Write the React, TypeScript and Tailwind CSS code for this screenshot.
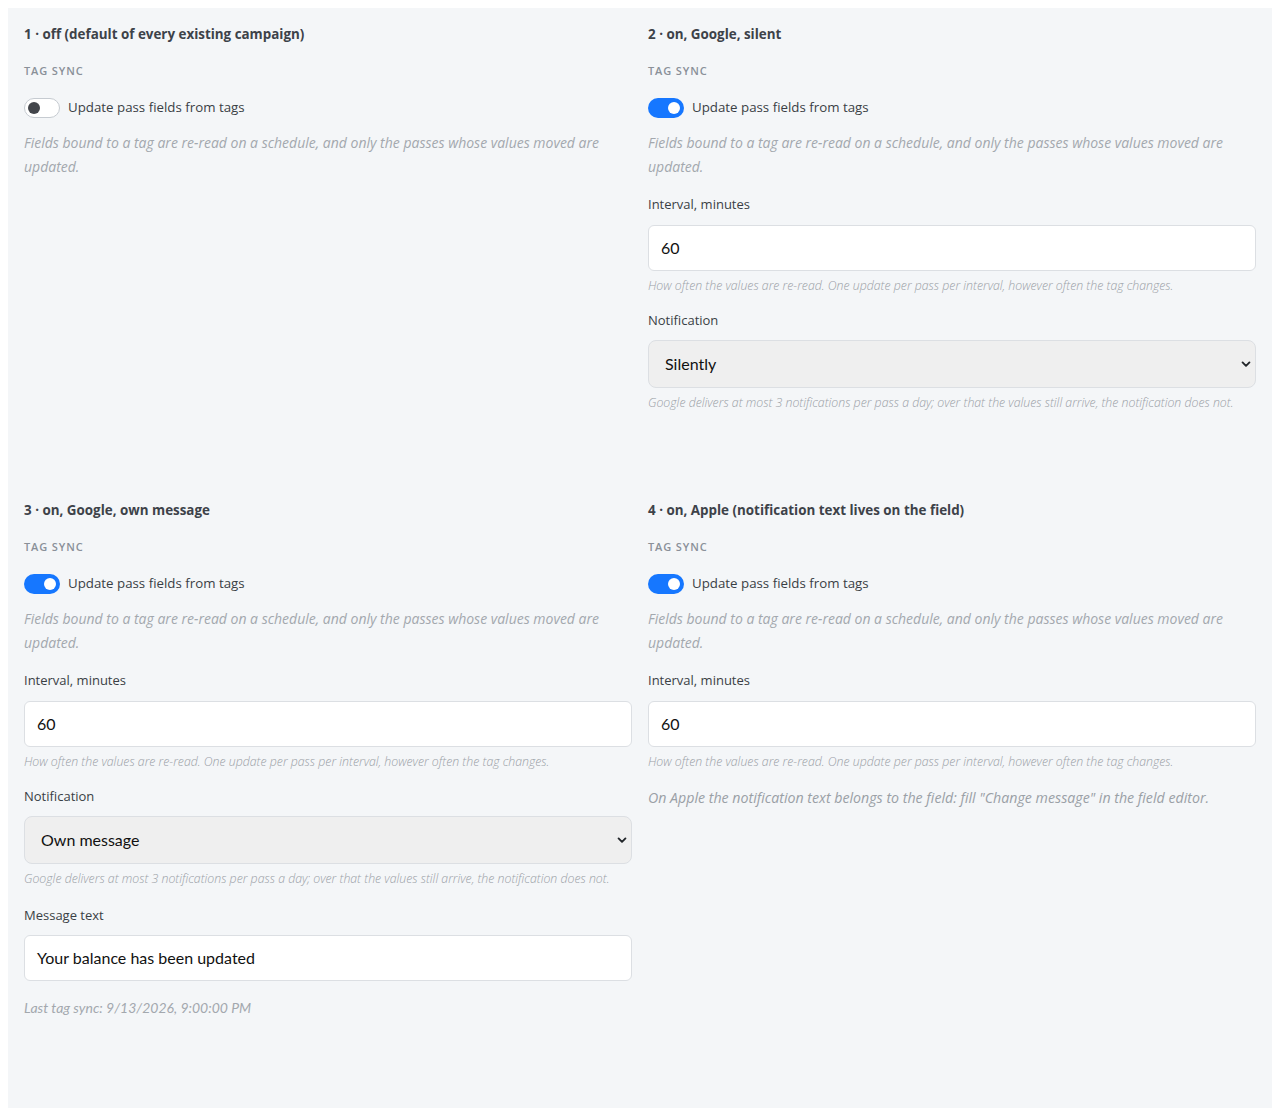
import React from "react";

const body = "font-['Open_Sans',sans-serif]";
const sys = "font-['Lato',sans-serif]";

function Toggle({ on }: { on: boolean }) {
  return on ? (
    <span className="flex h-5 w-9 items-center justify-end rounded-full bg-[#1677ff] px-[4px]">
      <span className="h-3 w-3 rounded-full bg-white" />
    </span>
  ) : (
    <span className="flex h-5 w-9 items-center justify-start rounded-full border border-[#c6cbd1] bg-white px-[3px]">
      <span className="h-3 w-3 rounded-full bg-[#43464b]" />
    </span>
  );
}

function Chevron() {
  return (
    <svg width="10" height="10" viewBox="0 0 16 16" className="text-[#212529]">
      <path d="M2.5 5.5l5.5 5.5 5.5-5.5" fill="none" stroke="currentColor" strokeWidth="3" strokeLinecap="round" strokeLinejoin="round" />
    </svg>
  );
}

function Head({ title, on }: { title: string; on: boolean }) {
  return (
    <>
      <h3 className={`${body} text-[13.4px] leading-5 font-bold text-[#3d4249]`}>{title}</h3>
      <div className={`${body} mt-[19px] text-[11px] leading-4 font-semibold tracking-[0.08em] text-[#8a9098]`}>TAG SYNC</div>
      <label className="mt-[17px] flex h-6 items-center gap-2">
        <Toggle on={on} />
        <span className={`${body} text-[13.3px] text-[#3a3f45]`}>Update pass fields from tags</span>
      </label>
      <p className={`${body} mt-[11px] text-[14px] leading-6 italic text-[#a3a8ae]`}>
        Fields bound to a tag are re-read on a schedule, and only the passes whose values moved are updated.
      </p>
    </>
  );
}

function Interval() {
  return (
    <>
      <div className={`${body} mt-[15px] text-[13px] leading-5 text-[#3a3f45]`}>Interval, minutes</div>
      <div className={`${sys} mt-[11px] flex h-[46px] items-center rounded-[6px] border border-[#dcdfe3] bg-white px-3 text-[16px] text-[#111]`}>
        60
      </div>
      <p className={`${body} mt-[7px] text-[12.3px] leading-4 font-light italic text-[#9aa0a6]`}>
        How often the values are re-read. One update per pass per interval, however often the tag changes.
      </p>
    </>
  );
}

function Notification({ value }: { value: string }) {
  return (
    <>
      <div className={`${body} mt-[16px] text-[13px] leading-5 text-[#3a3f45]`}>Notification</div>
      <div className={`${sys} mt-[10px] flex h-[48px] items-center justify-between rounded-[8px] border border-[#dcdfe3] bg-[#efefef] pr-[4px] pl-4 text-[16px] text-[#111]`}>
        <span>{value}</span>
        <Chevron />
      </div>
      <p className={`${body} mt-[7px] text-[12.3px] leading-4 font-light italic text-[#9aa0a6]`}>
        Google delivers at most 3 notifications per pass a day; over that the values still arrive, the notification does not.
      </p>
    </>
  );
}

export default function App() {
  return (
    <div className="min-h-screen bg-white p-2">
      <div className="grid h-[1100px] grid-cols-2 content-start gap-4 bg-[#f4f6f8] p-4">
        <section className="flex flex-col pb-[73px]">
          <Head title="1 · off (default of every existing campaign)" on={false} />
        </section>
        <section className="flex flex-col pb-[73px]">
          <Head title="2 · on, Google, silent" on />
          <Interval />
          <Notification value="Silently" />
        </section>
        <section className="flex flex-col pb-[73px]">
          <Head title="3 · on, Google, own message" on />
          <Interval />
          <Notification value="Own message" />
          <div className={`${body} mt-[18px] text-[13px] leading-5 text-[#3a3f45]`}>Message text</div>
          <div className={`${sys} mt-[10px] flex h-[46px] items-center rounded-[6px] border border-[#dcdfe3] bg-white px-3 text-[16px] text-[#111]`}>
            Your balance has been updated
          </div>
          <p className={`${sys} mt-[17px] text-[14px] leading-5 italic text-[#a3a8ae]`}>Last tag sync: 9/13/2026, 9:00:00 PM</p>
        </section>
        <section className="flex flex-col pb-[73px]">
          <Head title="4 · on, Apple (notification text lives on the field)" on />
          <Interval />
          <p className={`${body} mt-[18px] text-[14.2px] leading-5 italic text-[#9aa0a6]`}>
            On Apple the notification text belongs to the field: fill "Change message" in the field editor.
          </p>
        </section>
      </div>
    </div>
  );
}
